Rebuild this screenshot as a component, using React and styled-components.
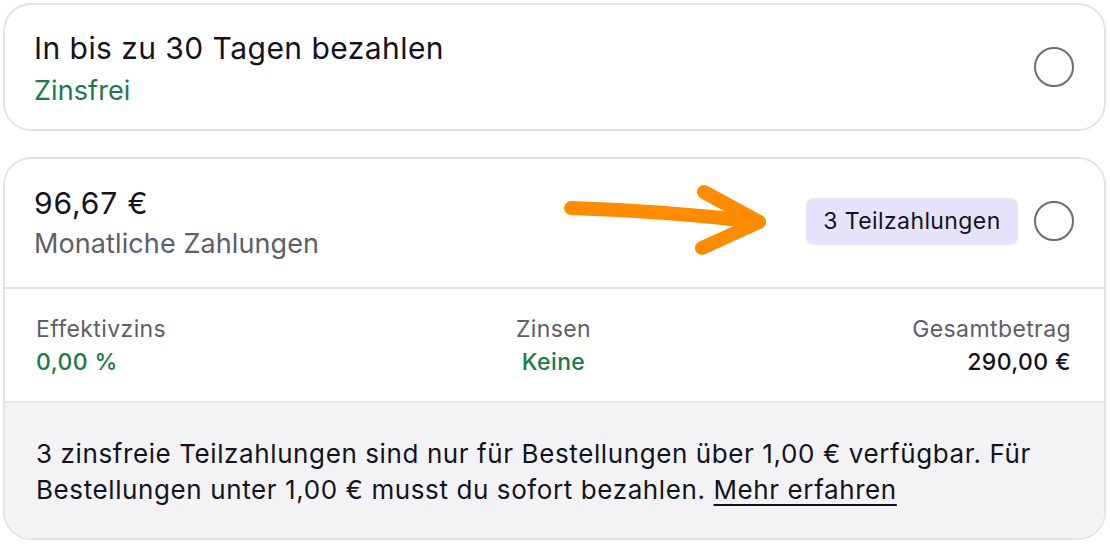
import styled, { createGlobalStyle } from 'styled-components';

const GlobalStyle = createGlobalStyle`
    body {
        margin: 0;
        background: #ffffff;
        font-family: Inter, "Noto Sans", "Liberation Sans", sans-serif;
        color: #13131f;
    }
`;

const Page = styled.div`
    display: flex;
    flex-direction: column;
    gap: 26px;
    padding: 3px 4px 0 3px;
`;

const Card = styled.div`
    border: 2px solid #e4e4e7;
    border-radius: 28px;
    overflow: hidden;
    background: #fff;
`;

const OptionRow = styled.div`
    display: flex;
    align-items: center;
    justify-content: space-between;
    height: ${(p) => p.$height}px;
    padding: 0 30px 0 29px;
    box-sizing: border-box;
`;

const TextBlock = styled.div`
    display: flex;
    flex-direction: column;
    gap: ${(p) => p.$gap || 8}px;
    padding-top: ${(p) => p.$shift || 0}px;
`;

const Title = styled.div`
    font-size: 30px;
    line-height: 34px;
    letter-spacing: ${(p) => p.$spacing || 0.45}px;
    color: #13131f;
`;

const Sub = styled.div`
    font-size: 27px;
    line-height: 32px;
    letter-spacing: 0.1px;
    color: ${(p) => (p.$green ? '#1b7a4c' : '#5e5e68')};
`;

const Right = styled.div`
    display: flex;
    align-items: center;
    gap: 16px;
    position: relative;
    margin-top: -4px;
`;

const Badge = styled.span`
    background: #e7e3fb;
    border-radius: 8px;
    width: 212px;
    height: 47px;
    display: flex;
    align-items: center;
    justify-content: center;
    font-size: 23px;
    letter-spacing: 0.4px;
    color: #13131f;
`;

const Radio = styled.span`
    width: 40px;
    height: 40px;
    border: 2px solid #6b6b70;
    border-radius: 50%;
    box-sizing: border-box;
    display: block;
    flex-shrink: 0;
`;

const Arrow = styled.svg`
    position: absolute;
    left: 0;
    top: 0;
    overflow: visible;
`;

const Stats = styled.div`
    display: grid;
    grid-template-columns: 1fr 1fr 1fr;
    border-top: 2px solid #e4e4e7;
    height: 114px;
    box-sizing: border-box;
    padding: 0 33px 0 31px;
    align-items: center;
`;

const Stat = styled.div`
    display: flex;
    flex-direction: column;
    gap: 1px;
    align-items: ${(p) => p.$align};
`;

const StatLabel = styled.div`
    font-size: 23px;
    line-height: 32px;
    letter-spacing: 0.4px;
    color: #5e5e68;
`;

const StatValue = styled.div`
    font-size: 23px;
    line-height: 32px;
    letter-spacing: 0.4px;
    font-weight: 500;
    color: ${(p) => (p.$green ? '#1b7a4c' : '#13131f')};
`;

const Note = styled.div`
    background: #f3f3f5;
    border-top: 2px solid #e4e4e7;
    padding: 33px 30px 30px 31px;
    font-size: 26px;
    line-height: 36px;
    letter-spacing: 0.6px;
    color: #13131f;

    a {
        color: inherit;
        text-decoration: underline;
        text-underline-offset: 5px;
        text-decoration-thickness: 2px;
    }
`;

const App = () => (
    <>
        <GlobalStyle />
        <Page>
            <Card>
                <OptionRow $height={124}>
                    <TextBlock $gap={10} $shift={3}>
                        <Title>In bis zu 30 Tagen bezahlen</Title>
                        <Sub $green>Zinsfrei</Sub>
                    </TextBlock>
                    <Radio />
                </OptionRow>
            </Card>
            <Card>
                <OptionRow $height={128}>
                    <TextBlock $gap={8}>
                        <Title $spacing={0.9}>96,67 €</Title>
                        <Sub>Monatliche Zahlungen</Sub>
                    </TextBlock>
                    <Right>
                        <Arrow width="10" height="10">
                            <g fill="none" stroke="#ff8c00" strokeWidth="14" strokeLinecap="round" strokeLinejoin="round">
                                <path d="M-235 10 Q-140 13 -47 24" />
                                <path d="M-102 -6 L-47 24 L-104 50" />
                            </g>
                        </Arrow>
                        <Badge>3 Teilzahlungen</Badge>
                        <Radio />
                    </Right>
                </OptionRow>
                <Stats>
                    <Stat $align="flex-start">
                        <StatLabel>Effektivzins</StatLabel>
                        <StatValue $green>0,00 %</StatValue>
                    </Stat>
                    <Stat $align="center">
                        <StatLabel>Zinsen</StatLabel>
                        <StatValue $green>Keine</StatValue>
                    </Stat>
                    <Stat $align="flex-end">
                        <StatLabel>Gesamtbetrag</StatLabel>
                        <StatValue>290,00 €</StatValue>
                    </Stat>
                </Stats>
                <Note>
                    3 zinsfreie Teilzahlungen sind nur für Bestellungen über 1,00 € verfügbar. Für Bestellungen unter 1,00 € musst du sofort bezahlen. <a href="#">Mehr erfahren</a>
                </Note>
            </Card>
        </Page>
    </>
);

export default App;
